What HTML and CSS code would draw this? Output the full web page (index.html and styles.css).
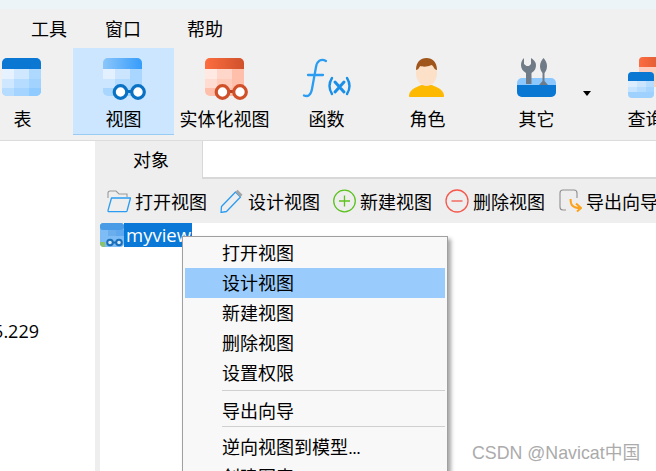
FILE: index.html
```html
<!DOCTYPE html>
<html lang="zh-CN">
<head>
<meta charset="utf-8">
<title>Navicat</title>
<link rel="stylesheet" href="styles.css">
</head>
<body>
<svg class="defs" width="0" height="0" aria-hidden="true">
  <defs>
    <linearGradient id="gBlue" x1="0" x2="1" y1="0" y2="0"><stop offset="0" stop-color="#8cc6fa"/><stop offset="1" stop-color="#359cfb"/></linearGradient>
    <linearGradient id="gOrange" x1="0" x2="1" y1="0" y2="0"><stop offset="0" stop-color="#fd6d40"/><stop offset="1" stop-color="#cf512b"/></linearGradient>
    <clipPath id="roundBox"><rect width="39" height="38" rx="5"/></clipPath>
  </defs>
</svg>

<div class="titlestrip"></div>

<nav class="menubar">
  <span class="menu-item first">工具</span>
  <span class="menu-item second">窗口</span>
  <span class="menu-item">帮助</span>
</nav>

<section class="ribbon">
  <div class="tool">
    <svg class="tool-icon" viewBox="0 0 44 42" width="44" height="42">
      <g clip-path="url(#roundBox)">
        <rect width="39" height="38" fill="#8fcbff"/>
        <rect width="39" height="11" fill="#0a78d2"/>
        <rect y="11" width="12" height="10" fill="#e6f2ff"/><rect x="12" y="11" width="15" height="10" fill="#cfe7ff"/><rect x="27" y="11" width="12" height="10" fill="#add8ff"/>
        <rect y="21" width="12" height="9" fill="#cfe7ff"/><rect x="12" y="21" width="15" height="9" fill="#b6dcff"/><rect x="27" y="21" width="12" height="9" fill="#a2d3ff"/>
        <rect y="30" width="12" height="8" fill="#b6dcff"/><rect x="12" y="30" width="15" height="8" fill="#a4d4ff"/><rect x="27" y="30" width="12" height="8" fill="#8fcbff"/>
      </g>
    </svg>
    <span class="tool-label">表</span>
  </div>

  <div class="tool active">
    <svg class="tool-icon" viewBox="0 0 44 42" width="44" height="42">
      <g clip-path="url(#roundBox)">
        <rect width="39" height="38" fill="#a8d6ff"/>
        <rect width="39" height="11" fill="url(#gBlue)"/>
        <rect y="11" width="12" height="10" fill="#e2f0ff"/><rect x="12" y="11" width="15" height="10" fill="#cbe5ff"/><rect x="27" y="11" width="12" height="10" fill="#a8d6ff"/>
        <rect y="21" width="12" height="9" fill="#cde6ff"/><rect x="12" y="21" width="15" height="9" fill="#b2dbff"/>
      </g>
      <path d="M23 33.500h12" stroke="#0a6fbf" stroke-width="3"/>
      <circle cx="17.500" cy="34" r="6.300" fill="#fff" stroke="#0a72c4" stroke-width="3.200"/>
      <circle cx="35" cy="34" r="6.300" fill="#fff" stroke="#0a72c4" stroke-width="3.200"/>
    </svg>
    <span class="tool-label">视图</span>
  </div>

  <div class="tool matview">
    <svg class="tool-icon" viewBox="0 0 44 42" width="44" height="42">
      <g clip-path="url(#roundBox)">
        <rect width="39" height="38" fill="#ffbfaa"/>
        <rect width="39" height="11" fill="url(#gOrange)"/>
        <rect y="11" width="12" height="10" fill="#ffe9e2"/><rect x="12" y="11" width="15" height="10" fill="#ffd6ca"/><rect x="27" y="11" width="12" height="10" fill="#ffbfaa"/>
        <rect y="21" width="12" height="9" fill="#ffdcd1"/><rect x="12" y="21" width="15" height="9" fill="#ffcbbb"/>
      </g>
      <path d="M23 33.500h12" stroke="#b84522" stroke-width="3"/>
      <circle cx="17.500" cy="34" r="6.300" fill="#fff" stroke="#d0502a" stroke-width="3.200"/>
      <circle cx="35" cy="34" r="6.300" fill="#fff" stroke="#d0502a" stroke-width="3.200"/>
    </svg>
    <span class="tool-label">实体化视图</span>
  </div>

  <div class="tool func">
    <svg class="tool-icon" viewBox="0 0 50 42" width="50" height="42">
      <path d="M23 3C18 0 14 3 13 9L9 31C8 37 5 39 1 37.500M5 17h15" fill="none" stroke="#2a9cf2" stroke-width="2.300" stroke-linecap="round"/>
      <path d="M29 20q-5 8 0 16M44 20q5 8 0 16" fill="none" stroke="#1a8fe8" stroke-width="2.400" stroke-linecap="round"/>
      <path d="M32 24l9 10M41 24l-9 10" fill="none" stroke="#1a8fe8" stroke-width="3" stroke-linecap="round"/>
    </svg>
    <span class="tool-label">函数</span>
  </div>

  <div class="tool">
    <svg class="tool-icon" viewBox="0 0 44 42" width="44" height="42">
      <path d="M2.500 38.500c0-6 4-8 12-11h10c8 3 12 5 12 11z" fill="#fdb900" stroke="#fdb900" stroke-width="1" stroke-linejoin="round"/>
      <ellipse cx="19.500" cy="15" rx="10.500" ry="13" fill="#fde0c8"/>
      <path d="M9 12C9 4 13.500 0 19.500 0S30 4 30 12c-3 0-3-4-5.500-5-4 2-9 2-11 1-1.500 1-2 4-4.500 4z" fill="#a0561a"/>
    </svg>
    <span class="tool-label">角色</span>
  </div>

  <div class="tool others">
    <svg class="tool-icon" viewBox="0 0 44 42" width="44" height="42">
      <rect y="20" width="39" height="19" rx="5" fill="#8cc8fd"/>
      <path d="M9 26V15C5.500 13 4 10 4 7 4 4 5 2 7 0V6L9.500 8H12L14 6V0C17 2 19 4 19 7 19 10 18 13 14.500 15V26z" fill="#6f7b87"/>
      <path d="M26.500 0C24.500 2 23 5 23 8c0 3 1 5 2.500 7v8l-3.500 4h9l-3.500-4v-8C29 13 30 11 30 8 30 5 28.500 2 26.500 0z" fill="#6f7b87"/>
      <path d="M0 27h39v7a5 5 0 0 1-5 5H5a5 5 0 0 1-5-5z" fill="#0a78d2"/>
    </svg>
    <span class="tool-label">其它</span>
  </div>
  <span class="caret"></span>

  <div class="tool query">
    <svg class="tool-icon" viewBox="0 0 44 42" width="44" height="42">
      <rect x="11" y="-1" width="33" height="30" rx="4" fill="#ffcdbd"/>
      <path d="M11 3a4 4 0 0 1 4-4h29v10H11z" fill="url(#gOrange)"/>
      <rect y="14" width="26" height="26" rx="4" fill="#9fd1ff"/>
      <path d="M0 18a4 4 0 0 1 4-4h18a4 4 0 0 1 4 4v5H0z" fill="#0a78d2"/>
      <rect y="23" width="9" height="6" fill="#dcedff"/><rect x="9" y="23" width="9" height="6" fill="#cbe5ff"/><rect x="18" y="23" width="8" height="6" fill="#b6dcff"/>
      <rect y="29" width="9" height="5" fill="#c6e3ff"/><rect x="9" y="29" width="9" height="5" fill="#b6dcff"/><rect x="18" y="29" width="8" height="5" fill="#a6d6ff"/>
    </svg>
    <span class="tool-label">查询</span>
  </div>
</section>

<main class="workspace">
  <aside class="sidebar"><span class="host">192.168.5.229</span></aside>

  <section class="pane">
    <div class="tabbar">
      <div class="tab">对象</div>
      <div class="tab-rest"></div>
    </div>

    <div class="actions">
      <span class="action">
        <svg width="24" height="23" viewBox="0 0 24 23"><path d="M1 8V3a2 2 0 0 1 2-2h6l3 3h8v3" fill="none" stroke="#9a9a9a" stroke-width="1.100"/><path d="M4.500 8H23.500l-3.500 13a1 1 0 0 1-1 .7H2a1 1 0 0 1-1-1.300z" fill="none" stroke="#2a9cf2" stroke-width="1.300" stroke-linejoin="round"/></svg>
        打开视图
      </span>
      <span class="action">
        <svg width="24" height="24" viewBox="0 0 24 24"><path d="M1.500 17.500L15.500 3l5 5L6.500 22.500l-5.500 1z" fill="none" stroke="#2a9cf2" stroke-width="1.300" stroke-linejoin="round"/><path d="M15.500 3l2-2.200 5 5-2 2.200z" fill="#a4a4a4"/></svg>
        设计视图
      </span>
      <span class="action">
        <svg width="23" height="24" viewBox="0 0 23 24"><circle cx="11.500" cy="12" r="10.800" fill="none" stroke="#5cc21e" stroke-width="1.300"/><path d="M11.500 6.500v11M6 12h11" stroke="#5cc21e" stroke-width="1.300"/></svg>
        新建视图
      </span>
      <span class="action">
        <svg width="24" height="24" viewBox="0 0 24 24"><circle cx="12" cy="12" r="11" fill="none" stroke="#f5594e" stroke-width="1.300"/><path d="M6.500 12h11" stroke="#f5594e" stroke-width="1.300"/></svg>
        删除视图
      </span>
      <span class="action">
        <svg width="24" height="24" viewBox="0 0 24 24"><path d="M8 21H5a3 3 0 0 1-3-3V4a3 3 0 0 1 3-3h11a3 3 0 0 1 3 3v5" fill="none" stroke="#8f8f8f" stroke-width="1.100"/><path d="M12.500 10c0 6 2 9 10 9M18 14.500l5 4.500-4 3.500" fill="none" stroke="#fca21b" stroke-width="2"/></svg>
        导出向导
      </span>
    </div>

    <div class="tree">
      <div class="tree-row">
        <svg width="25" height="25" viewBox="0 0 25 25">
          <rect width="24" height="24" rx="4" fill="#7dbcf5"/>
          <rect width="24" height="7" rx="3" fill="#4a9be6"/>
          <rect x="8" y="7" width="8" height="6" fill="#6aaeee"/>
          <rect x="16" y="7" width="8" height="6" fill="#5da8ee"/>
          <path d="M0 19h5v5H4a4 4 0 0 1-4-4z" fill="#8cc26a"/>
          <path d="M11 19.500h8" stroke="#1a6fb8" stroke-width="2"/>
          <circle cx="10" cy="19.500" r="2.800" fill="#d6eaff" stroke="#1a6fb8" stroke-width="2"/>
          <circle cx="19" cy="19.500" r="2.800" fill="#d6eaff" stroke="#1a6fb8" stroke-width="2"/>
        </svg>
        <span class="tree-label">myview</span>
      </div>
    </div>
  </section>
</main>

<ul class="context-menu">
  <li class="cm-item">打开视图</li>
  <li class="cm-item hover">设计视图</li>
  <li class="cm-item">新建视图</li>
  <li class="cm-item">删除视图</li>
  <li class="cm-item">设置权限</li>
  <li class="cm-sep first"></li>
  <li class="cm-item">导出向导</li>
  <li class="cm-sep"></li>
  <li class="cm-item">逆向视图到模型<span class="dots">...</span></li>
  <li class="cm-item">创建图表</li>
</ul>

<div class="watermark">CSDN @Navicat中国</div>
</body>
</html>
```

FILE: styles.css
```css
* { box-sizing: border-box; }

html, body {
  margin: 0;
  padding: 0;
  width: 656px;
  height: 471px;
  overflow: hidden;
}

body {
  position: relative;
  display: flex;
  flex-direction: column;
  background: #f0f0f0;
  color: #000;
  font-family: "Noto Sans CJK SC", "Liberation Sans", sans-serif;
  font-size: 18px;
}

.defs { position: absolute; }

.titlestrip {
  height: 9px;
  flex: none;
  background: #edf4f8;
}

.menubar {
  height: 39px;
  flex: none;
  display: flex;
  align-items: center;
  padding-left: 31px;
  line-height: 39px;
}

.menu-item.first { width: 74px; }
.menu-item.second { width: 82px; }

.ribbon {
  height: 87px;
  flex: none;
  display: flex;
  margin-left: -28px;
}

.tool {
  width: 101px;
  height: 87px;
  flex: none;
  display: flex;
  flex-direction: column;
  align-items: center;
  padding-top: 10px;
}

.tool-icon {
  display: block;
  flex: none;
  height: 42px;
  align-self: flex-start;
  margin-left: 30px;
  overflow: visible;
}

.tool-label {
  margin-top: 5px;
  line-height: 26px;
  white-space: nowrap;
}

.tool.active {
  background: #cce6ff;
  border-bottom: 1px solid #99ccf5;
}

.tool.matview { margin-right: 1px; }
.tool.matview .tool-icon { margin-left: 31px; }
.tool.func .tool-icon { margin-left: 27px; }
.tool.others { margin-left: 8px; }
.tool.others .tool-icon { margin-left: 31px; }
.tool.query .tool-icon { margin-left: 33px; }

.caret {
  flex: none;
  width: 0;
  height: 0;
  margin: 43px 4px 0 -4px;
  border-left: 4px solid transparent;
  border-right: 4px solid transparent;
  border-top: 5px solid #000;
}

.workspace {
  flex: 1;
  display: flex;
  min-height: 0;
  margin-top: 5px;
  border-top: 1px solid #dcdcdc;
}

.sidebar {
  width: 95px;
  flex: none;
  display: flex;
  justify-content: flex-end;
  padding: 178px 56px 0 0;
  overflow: hidden;
  background: #fff;
  font-family: "Open Sans", "Liberation Sans", sans-serif;
  font-size: 18px;
  line-height: 24px;
}

.host { white-space: nowrap; }

.pane {
  flex: 1;
  display: flex;
  flex-direction: column;
  min-width: 0;
  padding-left: 5px;
  background: #eeeeee;
}

.tabbar {
  height: 38px;
  flex: none;
  display: flex;
  margin-left: -5px;
}

.tab {
  width: 107px;
  padding-left: 5px;
  text-align: center;
  line-height: 36px;
}

.tab-rest {
  flex: 1;
  background: #fff;
  border-left: 1px solid #d8d8d8;
  border-bottom: 2px solid #d8d8d8;
}

.actions {
  height: 44px;
  flex: none;
  display: flex;
  align-items: center;
  padding-left: 7px;
  gap: 13px;
  white-space: nowrap;
  overflow: hidden;
}

.action {
  display: flex;
  align-items: center;
  gap: 4px;
  flex: none;
  line-height: 26px;
}

.tree {
  flex: 1;
  background: #fff;
}

.tree-row {
  display: flex;
  align-items: center;
  height: 24px;
}

.tree-label {
  margin-left: -1px;
  width: 68px;
  height: 24px;
  padding-left: 2px;
  background: #0a78d7;
  color: #fff;
  font-family: "Open Sans", "Liberation Sans", sans-serif;
  font-size: 18.500px;
  line-height: 24px;
  white-space: nowrap;
}

.context-menu {
  position: absolute;
  left: 182px;
  top: 236px;
  width: 266px;
  height: 260px;
  margin: 0;
  padding: 1px 2px 0;
  list-style: none;
  background: #f8f8f8;
  border: 1px solid #a0a0a0;
  box-shadow: 3px 3px 4px rgba(0, 0, 0, 0.35);
}

.cm-item {
  height: 30px;
  padding-left: 37px;
  line-height: 29px;
  white-space: nowrap;
}

.cm-item.hover { background: #99ccfd; }

.cm-sep {
  height: 1px;
  margin: 0 0 5px 37px;
  background: #d0d0d0;
}

.cm-sep.first { margin-top: 2px; }

.dots {
  font-family: "Liberation Sans", sans-serif;
  letter-spacing: -1px;
}

.watermark {
  position: absolute;
  left: 472px;
  top: 442px;
  color: #ababab;
  font-family: "Liberation Sans", "Noto Sans CJK SC", sans-serif;
  font-size: 17.800px;
  line-height: 22px;
  white-space: nowrap;
}
```
